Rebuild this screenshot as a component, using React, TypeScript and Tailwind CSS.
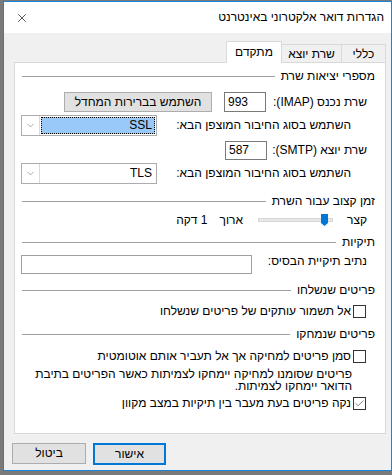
import { X, ChevronDown, Check } from 'lucide-react';

function SectionHeader({ title }: { title: string }) {
  return (
    <div className="flex items-center h-[15px] mr-[10px] ml-[7px]">
      <span className="whitespace-nowrap">{title}</span>
      <div className="flex-1 h-px bg-[#a0a0a0] mr-[6px]" />
    </div>
  );
}

function Combo({ value, focused }: { value: string; focused?: boolean }) {
  return (
    <div className="w-[136px] h-[21px] border border-[#acacac] bg-white flex items-stretch">
      <div className="flex-1 p-px">
        <div
          className={
            focused
              ? 'h-full bg-[#99c9f8] outline-1 outline-dotted outline-black -outline-offset-1 flex items-center pr-[3px]'
              : 'h-full flex items-center pr-[3px]'
          }
        >
          {value}
        </div>
      </div>
      <div className="w-[18px] border-r border-[#dadada] flex items-center justify-center text-[#606060]">
        <ChevronDown size={11} strokeWidth={1.2} />
      </div>
    </div>
  );
}

function CheckRow({ label, checked }: { label: string; checked?: boolean }) {
  return (
    <div className="flex items-center h-[16px] mr-[19px]">
      <div className="w-[13px] h-[13px] border border-[#333] bg-white flex items-center justify-center text-[#333]">
        {checked && <Check size={11} strokeWidth={1.3} />}
      </div>
      <span className="mr-[2px] whitespace-nowrap">{label}</span>
    </div>
  );
}

export default function App() {
  return (
    <div
      dir="rtl"
      className="w-[392px] h-[475px] bg-[#7a7a7a] pt-px font-['Liberation_Sans','DejaVu_Sans',sans-serif] text-[12px] leading-[15px] text-black"
    >
      <div className="w-[389px] h-[470px] border border-[#1883d7] bg-[#f0f0f0] flex flex-col">
        {/* Title bar */}
        <div className="h-[31px] bg-white flex items-center justify-between pr-[7px] pl-[11px]">
          <span>הגדרות דואר אלקטרוני באינטרנט</span>
          <X size={14} strokeWidth={1.1} className="text-black" />
        </div>

        {/* Tabs */}
        <div className="flex items-end h-[21px] mt-[8px] mr-[5px]">
          <div className="h-[18px] w-[45px] border border-b-0 border-[#d9d9d9] bg-[#f0f0f0] flex items-center justify-center pt-px">
            כללי
          </div>
          <div className="h-[18px] w-[60px] border-t border-l border-[#d9d9d9] bg-[#f0f0f0] flex items-center justify-center pt-px">
            שרת יוצא
          </div>
          <div className="h-[22px] w-[56px] -mr-px -mb-px border border-b-0 border-[#d9d9d9] bg-white flex items-center justify-center relative z-10">
            מתקדם
          </div>
        </div>

        {/* Panel */}
        <div className="h-[372px] ml-[10px] mr-[5px] border border-[#d9d9d9] bg-white flex flex-col">
          <div className="mt-[6px]">
            <SectionHeader title="מספרי יציאות שרת" />
          </div>

          <div className="flex items-center h-[20px] mt-[8px] mr-[18px]">
            <span className="w-[101px]">שרת נכנס (IMAP):</span>
            <div className="w-[42px] h-[20px] border border-[#7a7a7a] flex items-center pl-[3px] justify-end">993</div>
            <div className="w-[148px] h-[20px] mr-[12px] border border-[#adadad] bg-[#e1e1e1] flex items-center justify-center">
              השתמש בברירות המחדל
            </div>
          </div>

          <div className="flex items-center h-[21px] mt-[3px] mr-[34px]">
            <span className="w-[194px]">השתמש בסוג החיבור המוצפן הבא:</span>
            <Combo value="SSL" focused />
          </div>

          <div className="flex items-center h-[19px] mt-[5px] mr-[18px]">
            <span className="w-[100px]">שרת יוצא (SMTP):</span>
            <div className="w-[42px] h-[19px] border border-[#7a7a7a] flex items-center pl-[3px] justify-end">587</div>
          </div>

          <div className="flex items-center h-[21px] mt-[3px] mr-[34px]">
            <span className="w-[194px]">השתמש בסוג החיבור המוצפן הבא:</span>
            <Combo value="TLS" />
          </div>

          <div className="mt-[10px]">
            <SectionHeader title="זמן קצוב עבור השרת" />
          </div>

          <div className="flex items-center h-[16px] mt-[3px] mr-[18px]">
            <span>קצר</span>
            <div className="relative w-[75px] h-[16px] mr-[14px] flex items-center">
              <div className="w-full h-[4px] bg-[#e7eaea] border border-[#d6d6d6]" />
              <svg className="absolute left-[63px] top-[2px]" width="7" height="12" viewBox="0 0 7 12">
                <path d="M0 0 H7 V9 L3.5 12 L0 9 Z" fill="#0078d7" />
              </svg>
            </div>
            <span className="mr-[15px]">ארוך</span>
            <span className="mr-[12px]">1 דקה</span>
          </div>

          <div className="mt-[7px]">
            <SectionHeader title="תיקיות" />
          </div>

          <div className="flex items-start h-[20px] mt-[5px] mr-[18px]">
            <span className="w-[115px] mt-[-1px]">נתיב תיקיית הבסיס:</span>
            <div className="w-[231px] h-[19px] border border-[#a0a0a0] bg-white" />
          </div>

          <div className="mt-[8px]">
            <SectionHeader title="פריטים שנשלחו" />
          </div>

          <div className="mt-[5px]">
            <CheckRow label="אל תשמור עותקים של פריטים שנשלחו" />
          </div>

          <div className="mt-[8px]">
            <SectionHeader title="פריטים שנמחקו" />
          </div>

          <div className="mt-[6px]">
            <CheckRow label="סמן פריטים למחיקה אך אל תעביר אותם אוטומטית" />
          </div>

          <p className="mt-[4px] mr-[33px] ml-[6px] leading-[12px]">
            פריטים שסומנו למחיקה יימחקו לצמיתות כאשר הפריטים בתיבת הדואר יימחקו לצמיתות.
          </p>

          <div className="mt-[3px]">
            <CheckRow label="נקה פריטים בעת מעבר בין תיקיות במצב מקוון" checked />
          </div>
        </div>

        {/* Buttons */}
        <div className="flex justify-end gap-[7px] mt-[9px] pl-[8px]">
          <button className="w-[73px] h-[22px] border-2 border-[#0078d7] bg-[#e1e1e1] flex items-center justify-center">
            אישור
          </button>
          <button className="w-[74px] h-[21px] border border-[#adadad] bg-[#e1e1e1] flex items-center justify-center">
            ביטול
          </button>
        </div>
      </div>
    </div>
  );
}
